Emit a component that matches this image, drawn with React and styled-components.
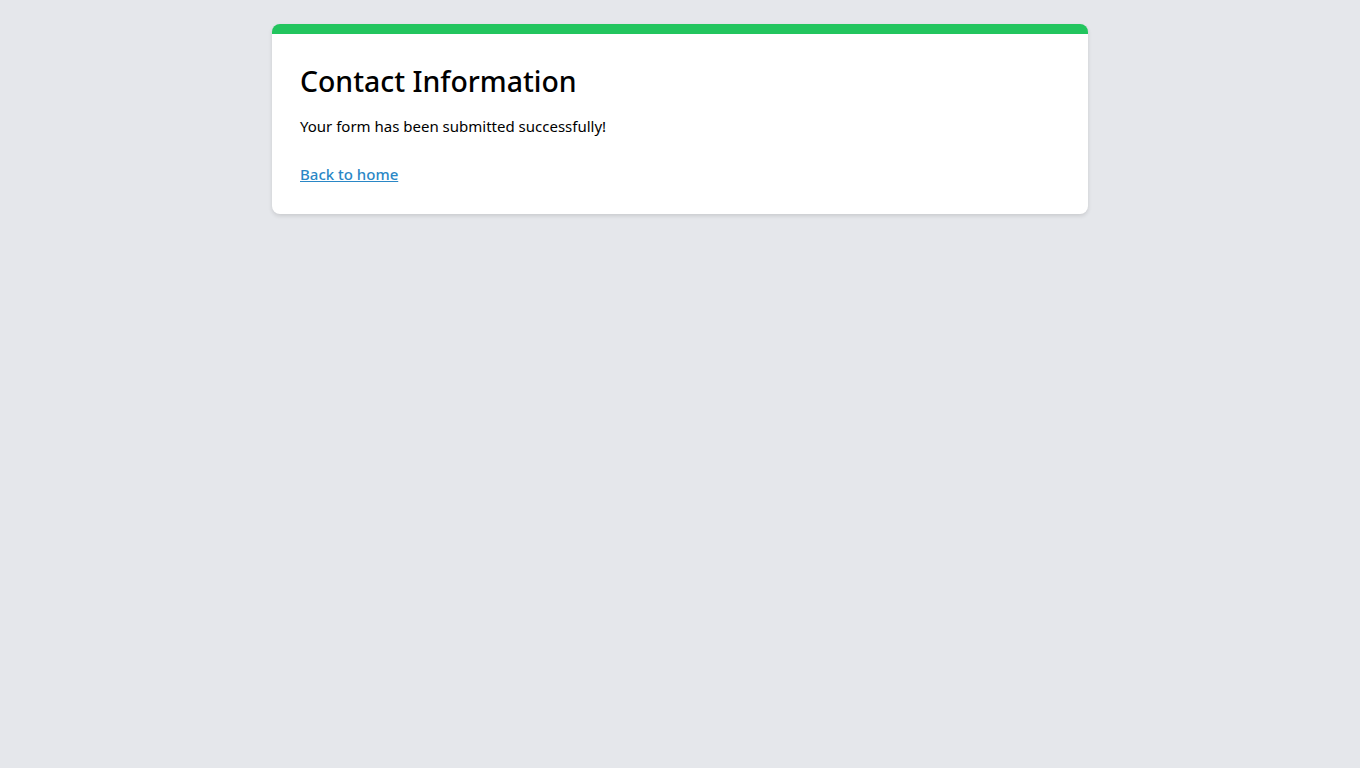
import React from "react";
import styled, { createGlobalStyle } from "styled-components";

const GlobalStyle = createGlobalStyle`
  body {
    margin: 0;
    background: #e5e7eb;
    font-family: "Noto Sans", "Open Sans", sans-serif;
    color: #000;
  }
`;

const Page = styled.div`
  min-height: 100vh;
  padding-top: 24px;
  box-sizing: border-box;
`;

const Card = styled.div`
  width: 816px;
  margin: 0 auto;
  background: #fff;
  border-top: 10px solid #22c55e;
  border-radius: 8px;
  box-shadow: 0 2px 4px rgba(0, 0, 0, 0.12);
  padding: 27px 28px 28px;
  box-sizing: border-box;
`;

const Title = styled.h1`
  margin: 0 0 13px;
  font-size: 28.4px;
  font-weight: 500;
  line-height: 40px;
`;

const Message = styled.p`
  margin: 0 0 24px;
  font-size: 15px;
  line-height: 24px;
`;

const HomeLink = styled.a`
  font-size: 15px;
  font-weight: 500;
  line-height: 24px;
  color: #2a87c6;
  text-decoration: underline;
`;

export default function App() {
  return (
    <Page>
      <GlobalStyle />
      <Card>
        <Title>Contact Information</Title>
        <Message>Your form has been submitted successfully!</Message>
        <HomeLink href="#">Back to home</HomeLink>
      </Card>
    </Page>
  );
}
